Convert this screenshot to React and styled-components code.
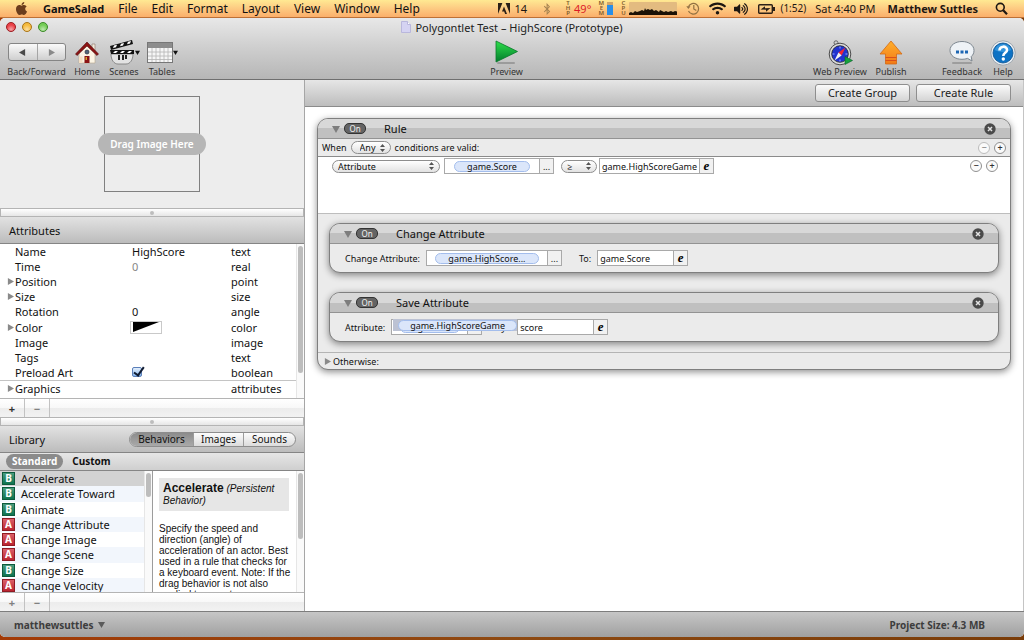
import React from 'react';
import styled, { createGlobalStyle, css } from 'styled-components';
import { FaApple, FaBluetoothB, FaWifi, FaVolumeUp } from 'react-icons/fa';

const MENUS = ['File', 'Edit', 'Format', 'Layout', 'View', 'Window', 'Help'];

const ATTRIBUTES = [
   { name: 'Name', value: 'HighScore', type: 'text' },
   { name: 'Time', value: '0', type: 'real', dim: true },
   { name: 'Position', type: 'point', open: true },
   { name: 'Size', type: 'size', open: true },
   { name: 'Rotation', value: '0', type: 'angle' },
   { name: 'Color', type: 'color', open: true, well: true },
   { name: 'Image', type: 'image' },
   { name: 'Tags', type: 'text' },
   { name: 'Preload Art', type: 'boolean', check: true },
   { name: 'Graphics', type: 'attributes', open: true, ruled: true },
];

const BEHAVIORS = [
   ['B', 'Accelerate'],
   ['B', 'Accelerate Toward'],
   ['B', 'Animate'],
   ['A', 'Change Attribute'],
   ['A', 'Change Image'],
   ['A', 'Change Scene'],
   ['B', 'Change Size'],
   ['A', 'Change Velocity'],
];

//ICONS
const AdobeIcon = () => (
   <svg width="12" height="11" viewBox="0 0 12 11">
      <path d="M0 0h4.400L0 11zM12 0H7.600L12 11zM6 3.600L9 11H7.100L6.200 8.600H4z" fill="#2b2017" />
   </svg>
);

const CpuGraph = () => (
   <svg width="48" height="13" viewBox="0 0 48 13">
      <rect width="48" height="13" rx="1" fill="#e3bb80" />
      <path
         d="M0 13v-2l2-1 2 1 2-2 2 1 3-1 2-1 2 1 1-3 1 2 2-1 2 1 2-1 2 2 2-1 3 2 1-2 2 1 2 1 2-1 2 1 3-1 2 1 2-1 4 1v4z"
         fill="#1c1206"
      />
   </svg>
);

const TimeMachineIcon = () => (
   <svg width="14" height="13" viewBox="0 0 14 13" fill="none" stroke="#927243" strokeWidth="1.200">
      <path d="M2.500 4.500A5.300 5.300 0 1 1 2.500 9M7.800 3v4l2.500 1.500" />
      <path d="M.3 4.200h4.200L2.400 7z" fill="#927243" stroke="none" />
   </svg>
);

const BatteryIcon = () => (
   <svg width="17" height="10" viewBox="0 0 17 10">
      <rect x=".7" y=".7" width="13.600" height="8.600" rx="1" fill="none" stroke="#2b2017" strokeWidth="1.400" />
      <path d="M14.500 3H17v4h-2.500zM2.500 5.500L7 2.300v2l5.500-.2L8 7.700v-2z" fill="#2b2017" />
   </svg>
);

const SearchIcon = () => (
   <svg width="13" height="13" viewBox="0 0 13 13" fill="none" stroke="#1d1712">
      <circle cx="5.300" cy="5.300" r="3.900" strokeWidth="1.600" />
      <path d="M8.200 8.200l3.800 4" strokeWidth="2.200" />
   </svg>
);

const HomeIcon = () => (
   <svg width="24" height="24" viewBox="0 0 24 24">
      <path d="M17 3h3v7h-3z" fill="#f3eadb" stroke="#8b7468" strokeWidth=".6" />
      <path d="M4 11L12 3l8 8v11H4z" fill="#fbf4e4" stroke="#b6a48c" strokeWidth=".6" />
      <path d="M.5 13L12 1l11.500 12-1.500 1.500L12 5 2 14.500z" fill="#8b1414" stroke="#4d0808" strokeWidth=".6" />
      <circle cx="12" cy="11" r="2" fill="#53657c" stroke="#27303c" strokeWidth=".7" />
      <path d="M9.500 15h5v7h-5z" fill="#8b1414" />
      <path d="M10.500 16h1.500v3h-1.500z" fill="#d8a52c" />
      <path d="M4 15.500h3.500v6.500H4z" fill="#f4dfc4" />
   </svg>
);

const ScenesIcon = () => (
   <svg width="26" height="25" viewBox="0 0 26 25">
      <path d="M2 14h22c0 6-3 10-7 10H9c-4 0-7-4-7-10z" fill="#e3e3e3" stroke="#777" strokeWidth=".8" />
      <path d="M10 15v5M14 15v5M17 15v4" stroke="#222" strokeWidth="2" />
      <path d="M1 10h24v4H2z" fill="#111" />
      <path d="M1 6L23 0l1 4L2 10z" fill="#111" />
      <path d="M4 13l2-2h3l-2 2zM11 13l2-2h3l-2 2zM18 13l2-2h3l-2 2zM4 8l1-2.500 3-.8L7 7.200zM11 6.200l1-2.500 3-.8-1 2.500zM18 4.200l1-2.500 3-.7-1 2.500z" fill="#fff" />
   </svg>
);

const TablesIcon = () => (
   <svg width="26" height="21" viewBox="0 0 26 21">
      <rect x=".5" y=".5" width="25" height="20" fill="#f6f6f6" stroke="#777" />
      <rect x="1" y="1" width="24" height="5" fill="#8d8d8d" />
      <path d="M1 10h24M1 14h24M1 17.500h24M5 6v14M9 6v14M13 6v14M17 6v14M21 6v14" stroke="#b5b5b5" strokeWidth=".8" />
   </svg>
);

const PreviewIcon = () => (
   <svg width="24" height="25" viewBox="0 0 24 25">
      <defs>
         <linearGradient id="play" x1="0" y1="0" x2="0" y2="1">
            <stop offset="0" stopColor="#2fe04b" />
            <stop offset="1" stopColor="#027c2d" />
         </linearGradient>
      </defs>
      <rect x="2" y="22" width="18" height="2" rx="1" fill="#9b9b9b" />
      <path d="M1 1l21.500 10.500L1 22z" fill="url(#play)" stroke="#0a7a2b" strokeWidth=".8" />
   </svg>
);

const WebPreviewIcon = () => (
   <svg width="25" height="26" viewBox="0 0 25 26">
      <circle cx="8" cy="2.800" r="2" fill="none" stroke="#666" />
      <circle cx="12" cy="14" r="10.800" fill="#dcdcdc" stroke="#4b4b4b" />
      <circle cx="12" cy="14" r="8.300" fill="#2133cf" stroke="#222" strokeWidth=".8" />
      <path d="M12 6.500v2M12 19.500v2M4.500 14h2M17.500 14h2" stroke="#9db0ff" />
      <path d="M17.500 7.500L13.600 15.400 10.500 12.500z" fill="#ef2635" />
      <path d="M6.500 20.500L10.500 12.500l3.100 2.900z" fill="#f4f4f4" />
      <path d="M17 16.500l7.500 4-7.500 4z" fill="#16a23b" stroke="#08602a" strokeWidth=".6" />
   </svg>
);

const PublishIcon = () => (
   <svg width="24" height="25" viewBox="0 0 24 25">
      <defs>
         <linearGradient id="up" x1="0" y1="0" x2="0" y2="1">
            <stop offset="0" stopColor="#ffb02c" />
            <stop offset="1" stopColor="#f37a16" />
         </linearGradient>
      </defs>
      <path d="M12 1l11 13h-5.500v10h-11V14H1z" fill="url(#up)" stroke="#d26a14" strokeWidth=".8" />
      <path d="M6.500 17.500h11M6.500 20.500h11" stroke="#d9501a" strokeWidth="1.200" />
   </svg>
);

const FeedbackIcon = () => (
   <svg width="26" height="25" viewBox="0 0 26 25">
      <rect x="3" y="22" width="20" height="2" rx="1" fill="#9d9d9d" />
      <path d="M13 1.500c7 0 12 3.800 12 8.900 0 2.800-1 4.600-2.800 6.200l.8 4.400-4.400-2.600c-1.700.6-3.500.9-5.600.9-7 0-12-3.800-12-8.900S6 1.500 13 1.500z" fill="#eef2f6" stroke="#7c868f" />
      <path d="M7 10.500h3v3H7zM11.500 10.500h3v3h-3zM16 10.500h3v3h-3z" fill="#1c66b4" />
   </svg>
);

const HelpIcon = () => (
   <svg width="26" height="26" viewBox="0 0 26 26">
      <circle cx="13" cy="13" r="12.200" fill="#e9eef3" stroke="#8d979f" strokeWidth=".8" />
      <circle cx="13" cy="13" r="10" fill="#0d72c4" stroke="#0b528f" strokeWidth=".8" />
      <path d="M4.500 10a9 9 0 0 1 17 0c-5 2.500-12 2.500-17 0z" fill="#3394dc" />
      <path d="M9.500 10.500c0-5 7.500-5 7.500-.6 0 3-3.700 2.800-3.700 6" fill="none" stroke="#fff" strokeWidth="2.600" />
      <circle cx="13.300" cy="19" r="1.700" fill="#fff" />
   </svg>
);

const DocIcon = () => (
   <svg width="10" height="12" viewBox="0 0 10 12">
      <path d="M.5.500h6l3 3v8h-9z" fill="#d5d3f2" stroke="#b9b7dc" />
      <path d="M6.500.500v3h3" fill="#fff" stroke="#b9b7dc" />
   </svg>
);

const Triangle = ({ dir = 'right', color = '#8a8a8a', size = 7 }) => (
   <svg width={size} height={size} viewBox="0 0 8 8">
      <path d={{ right: 'M1 0l7 4-7 4z', left: 'M7 0L0 4l7 4z', down: 'M0 1h8L4 8z' }[dir]} fill={color} />
   </svg>
);

const CloseIcon = () => (
   <svg width="12" height="12" viewBox="0 0 12 12">
      <circle cx="6" cy="6" r="5.700" fill="#4a4a4a" />
      <path d="M4 4l4 4M8 4l-4 4" stroke="#e2e2e2" strokeWidth="1.500" />
   </svg>
);

const Arrows = () => (
   <svg width="5" height="8" viewBox="0 0 5 8">
      <path d="M0 3h5L2.500 0zM0 5h5L2.500 8z" fill="#555" />
   </svg>
);

//COMPONENTS
const PopUp = ({ label, width, options, indent }) => (
   <PopUpBox $width={width}>
      <PopUpSelect aria-label={label} $indent={indent}>
         {options.map((o) => (
            <option key={o}>{o}</option>
         ))}
      </PopUpSelect>
      <Arrows />
   </PopUpBox>
);

const TokenField = ({ token, width, tokenWidth }) => (
   <Field $width={width}>
      <FieldBody>
         <Token $width={tokenWidth}>{token}</Token>
      </FieldBody>
      <FieldButton aria-label="Choose attribute">...</FieldButton>
   </Field>
);

const ExprField = ({ label, value, width }) => (
   <Field $width={width}>
      <FieldInput aria-label={label} defaultValue={value} />
      <FieldButton $script aria-label="Edit expression">e</FieldButton>
   </Field>
);

const CardHead = ({ title }) => (
   <Head>
      <Triangle dir="down" color="#7d7d7d" size={8} />
      <OnBadge>On</OnBadge>
      <HeadTitle>{title}</HeadTitle>
      <IconButton aria-label={`Remove ${title}`}>
         <CloseIcon />
      </IconButton>
   </Head>
);

const Tool = ({ label, width, children, menu }) => (
   <ToolButton $width={width}>
      <ToolIcon>
         {children}
         {menu && <Triangle dir="down" color="#111" size={5} />}
      </ToolIcon>
      {label}
   </ToolButton>
);

const App = () => {
   const [selected, setSelected] = React.useState('Accelerate');

   return (
      <Screen>
         <GlobalStyle />
         <MenuBar>
            <MenuGroup>
               <FaApple size={15} color="#6b3d1d" />
               <MenuItem $bold>GameSalad</MenuItem>
               {MENUS.map((m) => (
                  <MenuItem key={m}>{m}</MenuItem>
               ))}
            </MenuGroup>
            <StatusGroup>
               <Status $gap={4} $after={14}>
                  <AdobeIcon /> 14
               </Status>
               <Status $after={12}>
                  <FaBluetoothB size={12} color="#a58250" />
               </Status>
               <Status $gap={3} $after={7} $hot>
                  <Vertical>
                     <span>T</span>
                     <span>H</span>
                     <span>P</span>
                  </Vertical>
                  49°
               </Status>
               <Status $gap={3} $after={7}>
                  <Vertical>
                     <span>M</span>
                     <span>E</span>
                     <span>M</span>
                  </Vertical>
                  <Memory />
               </Status>
               <Status $gap={3} $after={9}>
                  <Vertical>
                     <span>C</span>
                     <span>P</span>
                     <span>U</span>
                  </Vertical>
                  <CpuGraph />
               </Status>
               <Status $after={9}>
                  <TimeMachineIcon />
               </Status>
               <Status $after={8}>
                  <FaWifi size={17} />
               </Status>
               <Status $after={10}>
                  <FaVolumeUp size={14} />
               </Status>
               <Status $gap={5} $after={9} $small>
                  <BatteryIcon /> (1:52)
               </Status>
               <Status $after={12}>Sat 4:40 PM</Status>
               <Status $after={17} $bold>Matthew Suttles</Status>
               <SearchIcon />
            </StatusGroup>
         </MenuBar>

         <Window>
            <WindowTop>
               <TitleBar>
                  <Lights>
                     <Light $color="#ea4046" $ring="#9b1f24" aria-label="Close" />
                     <Light $color="#f6bb3e" $ring="#a8741a" aria-label="Minimize" />
                     <Light $color="#74cc55" $ring="#3d8a2b" aria-label="Zoom" />
                  </Lights>
                  <Title>
                     <DocIcon /> Polygontlet Test – HighScore (Prototype)
                  </Title>
               </TitleBar>
               <Toolbar>
                  <ToolGroup>
                     <NavTool>
                        <NavPair>
                           <NavButton aria-label="Back">
                              <Triangle dir="left" color="#4a4a4a" />
                           </NavButton>
                           <NavButton aria-label="Forward">
                              <Triangle />
                           </NavButton>
                        </NavPair>
                        Back/Forward
                     </NavTool>
                     <Tool label="Home" width={38}>
                        <HomeIcon />
                     </Tool>
                     <Tool label="Scenes" width={36} menu>
                        <ScenesIcon />
                     </Tool>
                     <Tool label="Tables" width={40} menu>
                        <TablesIcon />
                     </Tool>
                  </ToolGroup>
                  <Tool label="Preview" width={40}>
                     <PreviewIcon />
                  </Tool>
                  <ToolGroup $end>
                     <Tool label="Web Preview" width={60}>
                        <WebPreviewIcon />
                     </Tool>
                     <Tool label="Publish" width={42}>
                        <PublishIcon />
                     </Tool>
                     <ToolGap />
                     <Tool label="Feedback" width={52}>
                        <FeedbackIcon />
                     </Tool>
                     <Tool label="Help" width={30}>
                        <HelpIcon />
                     </Tool>
                  </ToolGroup>
               </Toolbar>
            </WindowTop>

            <Content>
               <Sidebar>
                  <ImageWell>
                     <ImageFrame>
                        <ImageHint>Drag Image Here</ImageHint>
                     </ImageFrame>
                  </ImageWell>
                  <Splitter />
                  <PanelHead>Attributes</PanelHead>
                  <AttributePane>
                     <AttributeTable>
                        <tbody>
                           {ATTRIBUTES.map((a) => (
                              <AttributeRow key={a.name} $ruled={a.ruled}>
                                 <td>{a.open && <Triangle />}</td>
                                 <th scope="row">{a.name}</th>
                                 <AttributeValue $dim={a.dim}>
                                    {a.value}
                                    {a.well && (
                                       <ColorWell aria-label="Color">
                                          <svg width="26" height="10" viewBox="0 0 26 10">
                                             <path d="M0 0h26L0 10z" />
                                          </svg>
                                       </ColorWell>
                                    )}
                                    {a.check && <Check type="checkbox" defaultChecked aria-label={a.name} />}
                                 </AttributeValue>
                                 <td>{a.type}</td>
                              </AttributeRow>
                           ))}
                        </tbody>
                     </AttributeTable>
                     <Scroller>
                        <Thumb $height={127} />
                     </Scroller>
                  </AttributePane>
                  <ButtonBar>
                     <BarButton aria-label="Add attribute">+</BarButton>
                     <BarButton aria-label="Remove attribute" $dim>−</BarButton>
                  </ButtonBar>
                  <Splitter />
                  <PanelHead>
                     Library
                     <Segments>
                        <Segment $on $width={63}>Behaviors</Segment>
                        <Segment $width={50}>Images</Segment>
                        <Segment $width={52}>Sounds</Segment>
                     </Segments>
                  </PanelHead>
                  <Scopes>
                     <Scope $on>Standard</Scope>
                     <Scope>Custom</Scope>
                  </Scopes>
                  <LibraryPane>
                     <BehaviorList>
                        {BEHAVIORS.map(([kind, name]) => (
                           <BehaviorItem key={name} $on={name === selected} onClick={() => setSelected(name)}>
                              <Kind $kind={kind}>{kind}</Kind>
                              {name}
                           </BehaviorItem>
                        ))}
                     </BehaviorList>
                     <Scroller>
                        <Thumb $height={24} />
                     </Scroller>
                     <Help>
                        <HelpHead>
                           <HelpTitle>Accelerate</HelpTitle> <em>(Persistent Behavior)</em>
                        </HelpHead>
                        <HelpText>
                           Specify the speed and direction (angle) of acceleration of an actor. Best used in a rule that checks
                           for a keyboard event. Note: If the drag behavior is not also applied to an actor
                        </HelpText>
                     </Help>
                     <Scroller>
                        <Thumb $height={66} />
                     </Scroller>
                  </LibraryPane>
                  <ButtonBar>
                     <BarButton aria-label="Add behavior" $dim>+</BarButton>
                     <BarButton aria-label="Remove behavior" $dim>−</BarButton>
                  </ButtonBar>
               </Sidebar>

               <Editor>
                  <EditorBar>
                     <CreateButton>Create Group</CreateButton>
                     <CreateButton>Create Rule</CreateButton>
                  </EditorBar>
                  <Canvas>
                     <Card>
                        <CardHead title="Rule" />
                        <WhenRow>
                           When
                           <PopUp label="Match" width={40} options={['Any', 'All']} indent={8} />
                           conditions are valid:
                           <RowEnd>
                              <RoundButton aria-label="Remove group" $dim>−</RoundButton>
                              <RoundButton aria-label="Add group">+</RoundButton>
                           </RowEnd>
                        </WhenRow>
                        <Conditions>
                           <ConditionRow>
                              <PopUp label="Condition" width={108} options={['Attribute']} indent={5} />
                              <Spacer $width={0} />
                              <TokenField token="game.Score" width={110} tokenWidth={76} />
                              <Spacer $width={3} />
                              <PopUp label="Comparison" width={36} options={['≥', '>', '=', '<', '≤']} indent={5} />
                              <ExprField label="Value" value="game.HighScoreGame" width={115} />
                              <RowEnd>
                                 <RoundButton aria-label="Remove condition">−</RoundButton>
                                 <RoundButton aria-label="Add condition">+</RoundButton>
                              </RowEnd>
                           </ConditionRow>
                        </Conditions>
                        <Actions>
                           <Card>
                              <CardHead title="Change Attribute" />
                              <ActionRow>
                                 Change Attribute:
                                 <TokenField token="game.HighScore..." width={136} tokenWidth={104} />
                                 <Spacer $width={5} />
                                 To:
                                 <ExprField label="To" value="game.Score" width={91} />
                              </ActionRow>
                           </Card>
                           <Card>
                              <CardHead title="Save Attribute" />
                              <ActionRow>
                                 Attribute:
                                 <DropTarget>
                                    <TokenField token="game" width={91} tokenWidth={60} />
                                    <DragGhost>
                                       <Token $width={119}>game.HighScoreGame</Token>
                                    </DragGhost>
                                 </DropTarget>
                                 <KeyLabel>Key:</KeyLabel>
                                 <ExprField label="Key" value="score" width={91} />
                              </ActionRow>
                           </Card>
                        </Actions>
                        <Otherwise>
                           <Triangle />
                           Otherwise:
                        </Otherwise>
                     </Card>
                  </Canvas>
               </Editor>
            </Content>

            <StatusBar>
               <Account>
                  matthewsuttles <Triangle dir="down" color="#5a5a5a" />
               </Account>
               <span>Project Size: 4.3 MB</span>
            </StatusBar>
         </Window>
      </Screen>
   );
};

const GlobalStyle = createGlobalStyle`
   * {
      box-sizing: border-box;
   }

   body {
      margin: 0;
      font-family: 'Noto Sans', 'Open Sans', sans-serif;
      font-size: 11px;
      color: #111;
      background: #8a3d0b;
   }

   button, input, select {
      margin: 0;
      padding: 0;
      border: 0;
      font: inherit;
      color: inherit;
      background: none;
   }

   svg {
      display: block;
      flex: none;
   }
`;

const center = css`
   display: flex;
   align-items: center;
   justify-content: center;
`;

const Screen = styled.div`
   display: flex;
   flex-direction: column;
   height: 100vh;
   padding-bottom: 3px;
   overflow: hidden;
   background: linear-gradient(90deg, #a33a06, #8e4a12 50%, #7a3c08);
   white-space: nowrap;
`;

const MenuBar = styled.header`
   display: flex;
   justify-content: space-between;
   align-items: center;
   flex: none;
   height: 18px;
   padding: 0 16px 0 14px;
   border-bottom: 1px solid #bd7136;
   background: linear-gradient(#ffe992, #fdcd84 45%, #fbaf6b);
   line-height: 17px;
`;

const MenuGroup = styled.nav`
   display: flex;
   align-items: center;
   gap: 14px;
`;

const MenuItem = styled.button`
   font-size: ${({ $bold }) => ($bold ? 11 : 12)}px;
   font-weight: ${({ $bold }) => ($bold ? 700 : 400)};
`;

const StatusGroup = styled.div`
   display: flex;
   align-items: center;
`;

const Status = styled.div`
   display: flex;
   align-items: center;
   gap: ${({ $gap = 0 }) => $gap}px;
   margin-right: ${({ $after }) => $after}px;
   font-size: ${({ $small }) => ($small ? 10 : 11)}px;
   font-weight: ${({ $bold }) => ($bold ? 700 : 400)};
   color: ${({ $hot }) => ($hot ? '#dc1c26' : '#1d1712')};
`;

const Vertical = styled.span`
   display: flex;
   flex-direction: column;
   width: 6px;
   font-size: 6px;
   font-weight: 600;
   line-height: 5px;
   text-align: center;
   color: #7d5a2c;
`;

const Memory = styled.span`
   width: 6px;
   height: 13px;
   background: linear-gradient(#cfa56a 3px, #2a8fe8 3px);
`;

const Window = styled.main`
   display: flex;
   flex-direction: column;
   flex: 1;
   min-height: 0;
   border-radius: 5px;
   overflow: hidden;
   background: #fff;
`;

const WindowTop = styled.div`
   flex: none;
   height: 62px;
   border-bottom: 1px solid #6f6f6f;
   background: linear-gradient(#e8e8e8, #d0d0d0 45%, #b6b6b6);
`;

const TitleBar = styled.div`
   display: grid;
   grid-template-columns: 1fr auto 1fr;
   align-items: center;
   height: 18px;
   padding: 0 6px;
`;

const Lights = styled.div`
   display: flex;
   gap: 6px;
`;

const Light = styled.button`
   width: 10px;
   height: 10px;
   border: 1px solid ${({ $ring }) => $ring};
   border-radius: 50%;
   background: radial-gradient(circle at 50% 80%, #fff8, transparent 60%), ${({ $color }) => $color};
`;

const Title = styled.div`
   display: flex;
   align-items: center;
   gap: 4px;
   color: #222;
`;

const Toolbar = styled.div`
   display: grid;
   grid-template-columns: 49fr auto 50fr;
   padding: 3px 6px 0 5px;
`;

const ToolGroup = styled.div`
   display: flex;
   justify-content: ${({ $end }) => ($end ? 'flex-end' : 'flex-start')};
`;

const ToolGap = styled.span`
   width: 24px;
`;

const toolLabel = css`
   display: flex;
   flex-direction: column;
   align-items: center;
   font-size: 9px;
   line-height: 11px;
   color: #333;
`;

const ToolButton = styled.button`
   ${toolLabel}
   width: ${({ $width }) => $width}px;
`;

const NavTool = styled.div`
   ${toolLabel}
   width: 63px;
`;

const ToolIcon = styled.span`
   display: flex;
   align-items: center;
   height: 27px;
`;

const NavPair = styled.div`
   display: flex;
   height: 18px;
   margin: 4px 0 5px;
   border: 1px solid #858585;
   border-radius: 3px;
   background: linear-gradient(#fafafa, #cfcfcf);
`;

const NavButton = styled.button`
   ${center}
   width: 28px;

   & + & {
      border-left: 1px solid #a5a5a5;
   }
`;

const Content = styled.div`
   display: flex;
   flex: 1;
   min-height: 0;
`;

const Sidebar = styled.aside`
   display: flex;
   flex-direction: column;
   flex: none;
   width: 305px;
   border-right: 1px solid #a6a6a6;
   background: #ededed;
`;

const ImageWell = styled.section`
   ${center}
   flex: none;
   height: 128px;
`;

const ImageFrame = styled.div`
   ${center}
   width: 96px;
   height: 96px;
   border: 1px solid #808080;
`;

const ImageHint = styled.span`
   flex: none;
   padding: 0 12px;
   border-radius: 11px;
   background: #b6b6b6;
   color: #fff;
   font-size: 10px;
   font-weight: 600;
   line-height: 22px;
`;

const Splitter = styled.div`
   ${center}
   flex: none;
   height: 9px;
   border: 1px solid #b4b4b4;
   background: linear-gradient(#fff, #e6e6e6);

   &::after {
      content: '';
      width: 4px;
      height: 4px;
      border-radius: 50%;
      background: #bdbdbd;
   }
`;

const PanelHead = styled.h2`
   display: flex;
   align-items: center;
   justify-content: space-between;
   flex: none;
   height: 27px;
   margin: 0;
   padding: 0 8px 0 9px;
   border-bottom: 1px solid #858585;
   background: linear-gradient(#e2e2e2, #bcbcbc);
   font-size: 11px;
   font-weight: 400;
`;

const AttributePane = styled.section`
   display: flex;
   flex: none;
   height: 154px;
   background: #fff;
`;

const AttributeTable = styled.table`
   flex: 1;
   align-self: flex-start;
   height: 152px;
   border-collapse: collapse;
   table-layout: fixed;

   td, th {
      height: 15px;
      padding: 0;
      line-height: 15px;
      font-weight: 400;
      text-align: left;
   }

   td:first-child {
      width: 15px;
      padding-left: 7px;
   }

   th {
      width: 117px;
   }

   td:last-child {
      width: 65px;
   }
`;

const AttributeRow = styled.tr`
   border-top: ${({ $ruled }) => ($ruled ? '1px solid #c4c4c4' : '0')};
`;

const AttributeValue = styled.td`
   color: ${({ $dim }) => ($dim ? '#858585' : '#111')};
`;

const ColorWell = styled.button`
   ${center}
   width: 32px;
   height: 13px;
   margin-left: -2px;
   border: 1px solid #c9c9c9;
`;

const Check = styled.input`
   display: block;
   appearance: none;
   width: 10px;
   height: 10px;
   border: 1px solid #5b7fb9;
   border-radius: 2px;
   background: linear-gradient(#e4effc, #86b7ee);

   &:checked::after {
      content: '';
      display: block;
      width: 4px;
      height: 9px;
      margin: -3px 0 0 3px;
      border: solid #101c33;
      border-width: 0 2px 2px 0;
      transform: rotate(35deg);
   }
`;

const Scroller = styled.div`
   flex: none;
   width: 8px;
   padding: 2px 1px;
   border-left: 1px solid #e6e6e6;
   background: #fafafa;
`;

const Thumb = styled.div`
   width: 5px;
   height: ${({ $height }) => $height}px;
   border-radius: 3px;
   background: #bdbdbd;
`;

const ButtonBar = styled.div`
   display: flex;
   flex: none;
   height: 19px;
   border-top: 1px solid #b4b4b4;
   background: linear-gradient(#fff, #f8f8f8 50%, #ececec 50%, #f2f2f2);
`;

const BarButton = styled.button`
   ${center}
   width: 25px;
   border-right: 1px solid #c2c2c2;
   font-weight: 700;
   color: ${({ $dim }) => ($dim ? '#808080' : '#333')};
`;

const Segments = styled.div`
   display: flex;
   height: 15px;
   border: 1px solid #8d8d8d;
   border-radius: 8px;
   overflow: hidden;
   background: linear-gradient(#fcfcfc, #dcdcdc);
`;

const Segment = styled.button`
   width: ${({ $width }) => $width}px;
   background: ${({ $on }) => ($on ? 'linear-gradient(#8c8c8c, #a9a9a9)' : 'none')};
   font-size: 10px;
   line-height: 13px;

   & + & {
      border-left: 1px solid #9c9c9c;
   }
`;

const Scopes = styled.div`
   display: flex;
   align-items: center;
   gap: 3px;
   flex: none;
   height: 18px;
   padding: 0 6px;
   border-bottom: 1px solid #858585;
   background: linear-gradient(#e6e6e6, #cfcfcf);
`;

const Scope = styled.button`
   padding: 0 6px;
   border-radius: 8px;
   background: ${({ $on }) => ($on ? '#8b8b8b' : 'none')};
   color: ${({ $on }) => ($on ? '#fff' : '#111')};
   font-size: 10px;
   font-weight: 700;
   line-height: 15px;
`;

const LibraryPane = styled.section`
   display: flex;
   flex: 1;
   min-height: 0;
   overflow: hidden;
   background: #fff;
`;

const BehaviorList = styled.ul`
   display: grid;
   grid-auto-rows: 1fr;
   flex: none;
   width: 144px;
   height: 122px;
   margin: 0;
   padding: 0;
   list-style: none;
`;

const BehaviorItem = styled.li`
   display: flex;
   align-items: center;
   gap: 6px;
   padding-left: 2px;
   background: ${({ $on }) => ($on ? '#d2d2d2' : '#fff')};
   line-height: 15px;

   &:nth-child(even) {
      background: ${({ $on }) => ($on ? '#d2d2d2' : '#f2f6fc')};
   }
`;

const Kind = styled.span`
   ${center}
   width: 13px;
   height: 13px;
   border: 1px solid ${({ $kind }) => ($kind === 'A' ? '#8f1b24' : '#0d5a3d')};
   background: ${({ $kind }) =>
      $kind === 'A' ? 'linear-gradient(#da6068, #bb2430)' : 'linear-gradient(#4b9c7e, #0f7350)'};
   color: #fff;
   font-size: 10px;
   font-weight: 700;
   line-height: 11px;
`;

const Help = styled.article`
   flex: 1;
   padding: 7px 1px 0 6px;
   border-left: 1px solid #9c9c9c;
   overflow: hidden;
   font: 10px/11px 'Liberation Sans', Arial, sans-serif;
   white-space: normal;
`;

const HelpHead = styled.div`
   margin-right: 6px;
   padding: 4px;
   background: #e6e6e6;
   line-height: 12px;
`;

const HelpTitle = styled.strong`
   font-size: 12px;
`;

const HelpText = styled.p`
   margin: 12px 0 0;
`;

const Editor = styled.section`
   display: flex;
   flex-direction: column;
   flex: 1;
   min-width: 0;
   border-right: 1px solid #c4c4c4;
`;

const EditorBar = styled.div`
   display: flex;
   align-items: center;
   justify-content: flex-end;
   gap: 6px;
   flex: none;
   height: 27px;
   padding-right: 12px;
   border-bottom: 1px solid #8b8b8b;
   background: linear-gradient(#e6e6e6, #bdbdbd);
`;

const CreateButton = styled.button`
   width: 95px;
   height: 18px;
   border: 1px solid #8e8e8e;
   border-radius: 3px;
   background: linear-gradient(#fafafa, #d4d4d4);
   color: #222;
   line-height: 16px;
`;

const Canvas = styled.div`
   flex: 1;
   min-height: 0;
   padding: 11px 12px 0 12px;
   background: #fff;
`;

const Card = styled.article`
   border: 1px solid #7f7f7f;
   border-radius: 11px;
   overflow: hidden;
   background: #ebebeb;
   box-shadow: 0 2px 7px rgba(0, 0, 0, 0.45);
`;

const Head = styled.header`
   display: flex;
   align-items: center;
   height: 20px;
   padding: 0 14px;
   border-bottom: 1px solid #939393;
   background: linear-gradient(#d8d8d8 50%, #c0c0c0 50%);
`;

const OnBadge = styled.button`
   width: 22px;
   height: 11px;
   margin: 0 18px 0 4px;
   border: 1px solid #333;
   border-radius: 5px;
   background: #646464;
   color: #f2f2f2;
   font-size: 8px;
   line-height: 9px;
`;

const HeadTitle = styled.h3`
   flex: 1;
   margin: 0;
   font-size: 11px;
   font-weight: 400;
`;

const IconButton = styled.button`
   display: flex;
`;

const row = css`
   display: flex;
   align-items: center;
   gap: 4px;
   font-size: 9px;
`;

const WhenRow = styled.div`
   ${row}
   height: 18px;
   padding: 0 4px;
   border-bottom: 1px solid #8b8b8b;
`;

const Conditions = styled.div`
   height: 57px;
   border-bottom: 1px solid #bdbdbd;
   background: #fff;
`;

const ConditionRow = styled.div`
   ${row}
   gap: 2px;
   height: 18px;
   padding: 0 12px 0 14px;
`;

const RowEnd = styled.span`
   display: flex;
   gap: 4px;
   margin-left: auto;
`;

const RoundButton = styled.button`
   ${center}
   width: 12px;
   height: 12px;
   border: 1px solid ${({ $dim }) => ($dim ? '#bcbcbc' : '#909090')};
   border-radius: 50%;
   background: #fafafa;
   color: ${({ $dim }) => ($dim ? '#8a8a8a' : '#333')};
   font-size: 9px;
   font-weight: 600;
   line-height: 10px;
`;

const Actions = styled.div`
   display: flex;
   flex-direction: column;
   gap: 19px;
   padding: 9px 11px 10px;
`;

const ActionRow = styled.div`
   ${row}
   gap: 6px;
   height: 28px;
   padding-left: 15px;
`;

const Otherwise = styled.footer`
   ${row}
   gap: 2px;
   height: 17px;
   padding-left: 6px;
   border-top: 1px solid #b4b4b4;
`;

const PopUpBox = styled.span`
   display: grid;
   grid-template-columns: 1fr 10px;
   align-items: center;
   width: ${({ $width }) => $width}px;
   height: 13px;
   border: 1px solid #8e8e8e;
   border-radius: 7px;
   background: linear-gradient(#fff, #e2e2e2);

   svg {
      grid-area: 1 / 2;
      pointer-events: none;
   }
`;

const PopUpSelect = styled.select`
   appearance: none;
   grid-area: 1 / 1 / 2 / 3;
   height: 11px;
   padding-left: ${({ $indent }) => $indent}px;
   line-height: 11px;
`;

const Field = styled.span`
   display: flex;
   width: ${({ $width }) => $width}px;
   height: 16px;
   border: 1px solid #a9a9a9;
   background: #fff;
`;

const FieldBody = styled.span`
   ${center}
   flex: 1;
   min-width: 0;
`;

const FieldInput = styled.input`
   flex: 1;
   min-width: 0;
   padding-left: 2px;
`;

const FieldButton = styled.button`
   ${center}
   width: 14px;
   border-left: 1px solid #a9a9a9;
   background: #f1f1f1;

   ${({ $script }) =>
      $script &&
      css`
         font: italic 700 13px/12px 'Liberation Serif', serif;
         color: #000;
      `}
`;

const Token = styled.span`
   width: ${({ $width }) => $width}px;
   height: 11px;
   border: 1px solid #a3bdec;
   border-radius: 6px;
   background: #dbe6fa;
   line-height: 9px;
   text-align: center;
`;

const DropTarget = styled.div`
   position: relative;
`;

const DragGhost = styled.div`
   position: absolute;
   top: 0;
   left: 2px;
   display: flex;
   padding: 1px 0 0 5px;
   background: #bcc2d3;
`;

const KeyLabel = styled.span`
   width: 23px;
   text-align: center;
`;

const Spacer = styled.span`
   width: ${({ $width }) => $width}px;
`;

const StatusBar = styled.footer`
   display: flex;
   align-items: center;
   justify-content: space-between;
   flex: none;
   height: 26px;
   padding: 0 39px 0 14px;
   border-top: 1px solid #7d7d7d;
   background: linear-gradient(#c6c6c6, #a0a0a0);
   font-size: 10px;
   font-weight: 700;
   color: #3d3d3d;
`;

const Account = styled.button`
   display: flex;
   align-items: center;
   gap: 5px;
`;

export default App;
